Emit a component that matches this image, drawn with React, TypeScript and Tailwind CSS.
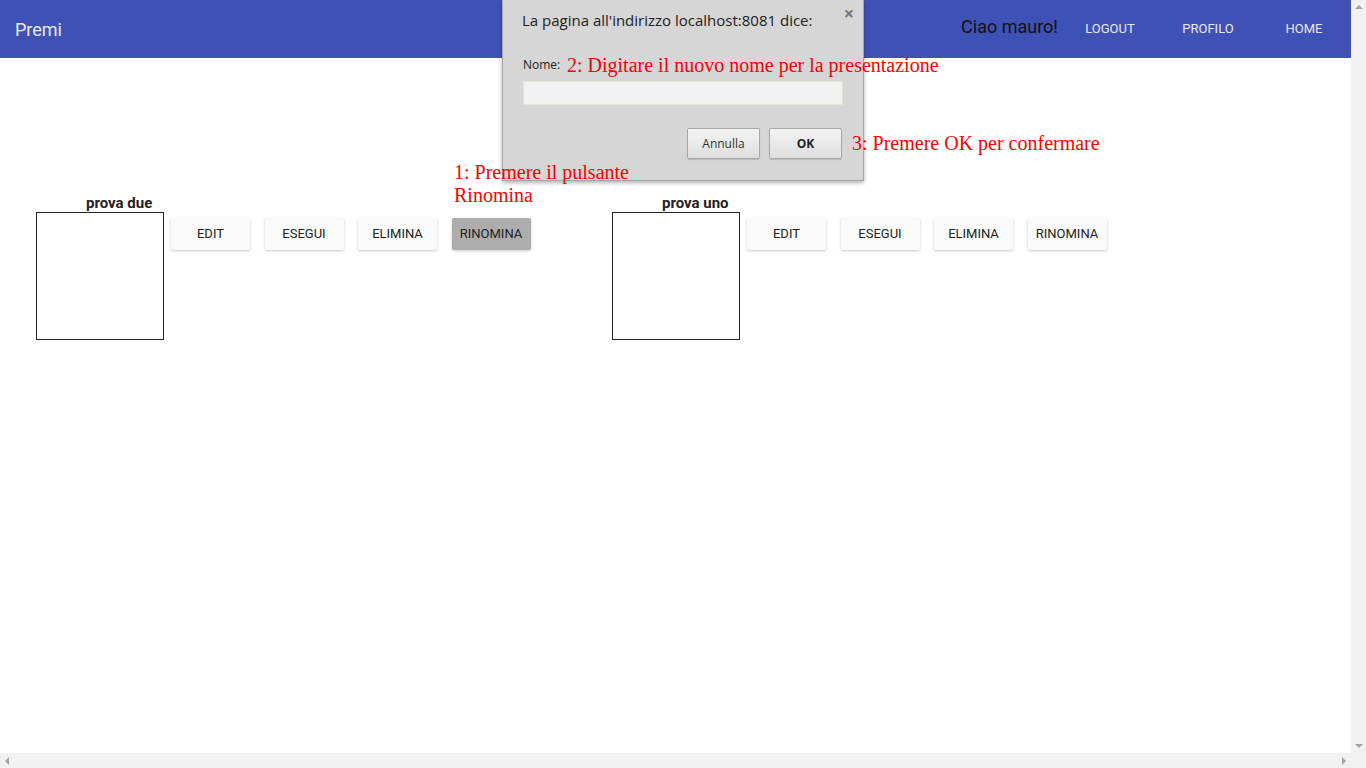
import React from "react";

const roboto = { fontFamily: "Roboto, 'Liberation Sans', sans-serif" };

function Card({ title, pressed }: { title: string; pressed?: boolean }) {
  const labels = ["EDIT", "ESEGUI", "ELIMINA", "RINOMINA"];
  return (
    <div className="flex w-[576px] shrink-0 items-start">
      <div className="flex flex-col">
        <div className="h-[17px] pl-[50px] text-[15px] font-bold leading-[17px] text-[#222]">{title}</div>
        <div className="h-[128px] w-[128px] border border-[#222] bg-white" />
      </div>
      <div className="ml-[7px] mt-[23px] flex gap-[14.5px]">
        {labels.map((l, i) => (
          <div
            key={l}
            className={`flex h-[32px] w-[79px] items-center justify-center rounded-[2px] text-[13px] text-[#222] shadow-[0_1px_3px_rgba(0,0,0,0.22)] ${
              pressed && i === 3 ? "bg-[#adadad]" : "bg-[#fafafa]"
            }`}
          >
            {l}
          </div>
        ))}
      </div>
    </div>
  );
}

export default function App() {
  return (
    <div className="flex h-screen w-screen flex-col overflow-hidden bg-white" style={roboto}>
      <div className="flex min-h-0 flex-1">
        <div className="relative flex-1">
          <div className="flex h-[58px] items-center bg-[#3f51b5]">
            <div className="pl-[15px] text-[18px] text-[#e8eaf6]">Premi</div>
            <div className="ml-auto flex items-center">
              <div className="mb-[6px] mr-[3px] text-[18px] text-[#111]">Ciao mauro!</div>
              <div className="w-[98px] text-center text-[13px] text-[#e8eaf6]">LOGOUT</div>
              <div className="w-[98px] text-center text-[13px] text-[#e8eaf6]">PROFILO</div>
              <div className="w-[94px] text-center text-[13px] text-[#e8eaf6]">HOME</div>
            </div>
          </div>

          <div className="flex pl-[36px] pt-[137px]">
            <Card title="prova due" pressed />
            <Card title="prova uno" />
          </div>

          {/* alert dialog */}
          <div
            className="absolute left-[502px] top-[-1px] h-[182px] w-[362px] border border-[#a6a6a6] bg-[#d6d6d6] shadow-[0_2px_4px_rgba(0,0,0,0.3)]"
            style={{ fontFamily: "'Open Sans', 'Noto Sans', sans-serif" }}
          >
            <div className="flex items-start justify-between pl-[19px] pr-[9px] pt-[10px]">
              <div className="text-[15px] leading-[20px] text-[#222]">La pagina all'indirizzo localhost:8081 dice:</div>
              <div className="mt-[-7px] text-[18px] font-bold leading-[20px] text-[#777]">×</div>
            </div>
            <div className="pl-[20px] pt-[27px] text-[12px] leading-[16px] text-[#222]">Nome:</div>
            <div className="ml-[20px] mt-[8px] h-[24px] w-[320px] border border-[#dfe5d6] bg-[#f2f2f2]" />
            <div className="mt-[23px] flex justify-end gap-[9px] pr-[21px]">
              <div className="flex h-[31px] w-[73px] items-center justify-center rounded-[2px] border border-[#a8a8a8] bg-gradient-to-b from-[#f4f4f4] to-[#dedede] text-[12px] text-[#333] shadow-[0_1px_1px_rgba(0,0,0,0.15)]">
                Annulla
              </div>
              <div className="flex h-[31px] w-[73px] items-center justify-center rounded-[2px] border border-[#a8a8a8] bg-gradient-to-b from-[#f4f4f4] to-[#dedede] text-[12px] font-bold text-[#222] shadow-[0_1px_1px_rgba(0,0,0,0.15)]">
                OK
              </div>
            </div>
          </div>

          {/* annotations */}
          <div
            className="absolute left-[567px] top-[54px] whitespace-nowrap text-[20px] leading-[23px] text-[#ff0000]"
            style={{ fontFamily: "'Liberation Serif', serif" }}
          >
            2: Digitare il nuovo nome per la presentazione
          </div>
          <div
            className="absolute left-[852px] top-[132px] whitespace-nowrap text-[20px] leading-[23px] text-[#ff0000]"
            style={{ fontFamily: "'Liberation Serif', serif" }}
          >
            3: Premere OK per confermare
          </div>
          <div
            className="absolute left-[454px] top-[161px] whitespace-nowrap text-[20px] leading-[23px] text-[#ff0000]"
            style={{ fontFamily: "'Liberation Serif', serif" }}
          >
            1: Premere il pulsante
            <br />
            Rinomina
          </div>
        </div>
        <div className="flex w-[15px] flex-col items-center justify-between bg-[#f1f1f1] py-[5px]">
          <div className="h-0 w-0 border-x-[4px] border-b-[4px] border-x-transparent border-b-[#a3a3a3]" />
          <div className="h-0 w-0 border-x-[4px] border-t-[4px] border-x-transparent border-t-[#a3a3a3]" />
        </div>
      </div>
      <div className="flex h-[15px]">
        <div className="flex flex-1 items-center justify-between bg-[#f1f1f1] px-[5px]">
          <div className="h-0 w-0 border-y-[4px] border-r-[4px] border-y-transparent border-r-[#a3a3a3]" />
          <div className="h-0 w-0 border-y-[4px] border-l-[4px] border-y-transparent border-l-[#a3a3a3]" />
        </div>
        <div className="w-[15px] bg-[#f1f1f1]" />
      </div>
    </div>
  );
}
